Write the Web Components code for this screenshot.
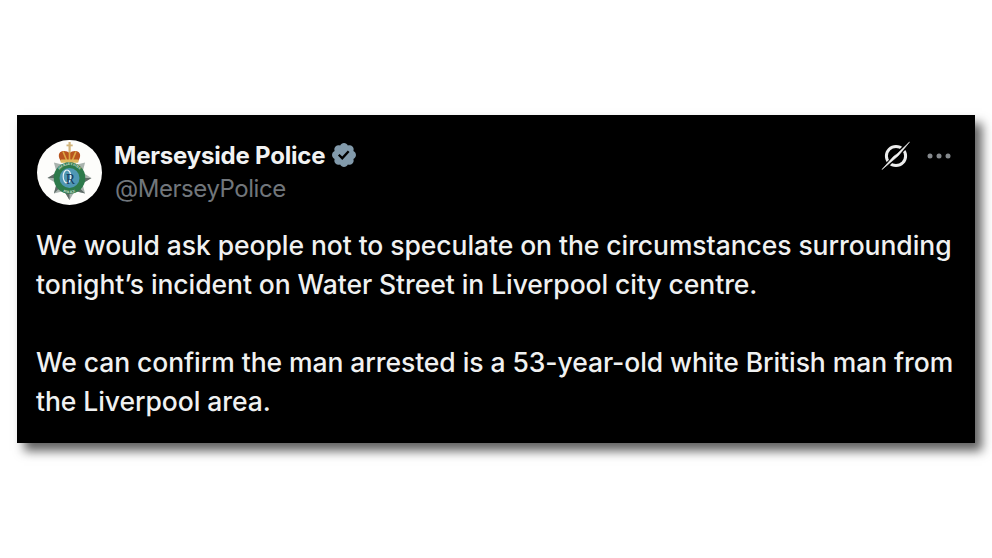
<!DOCTYPE html>
<html>
<head>
<meta charset="utf-8">
<title>Merseyside Police</title>
<style>
    html, body { margin: 0; background: #fff; }
    body { font-family: "Inter", "Liberation Sans", sans-serif; }
</style>
</head>
<body>
<tweet-page>
    <tweet-card>
        <police-avatar slot="avatar"></police-avatar>
        <span slot="name">Merseyside Police</span>
        <span slot="handle">@MerseyPolice</span>
        <p>We would ask people not to speculate on the circumstances surrounding<br>tonight’s incident on Water Street in Liverpool city centre.</p>
        <p>We can confirm the man arrested is a 53-year-old white British man from<br>the Liverpool area.</p>
    </tweet-card>
</tweet-page>
<script>
class TweetPage extends HTMLElement {
    connectedCallback() {
        this.attachShadow({ mode: 'open' })
        this.shadowRoot.innerHTML = `
            <style>
                :host {
                    display: block;
                    box-sizing: border-box;
                    width: 992px;
                    height: 558px;
                    padding: 115px 17px 0;
                    overflow: hidden;
                }
            </style>
            <slot></slot>
        `
    }
}

class PoliceAvatar extends HTMLElement {
    connectedCallback() {
        this.attachShadow({ mode: 'open' })
        this.shadowRoot.innerHTML = `
            <style>
                :host { display: block; width: 65px; height: 65px; }
                svg { display: block; }
                text { font-family: "Liberation Serif", serif; }
            </style>
            <svg width="65" height="65" viewBox="0 0 65 65">
                <defs>
                    <path id="ring-top" d="M19.5 38 A13 13 0 0 1 45.5 38"/>
                    <path id="ring-bottom" d="M17.500 38 A15 15 0 0 0 47.500 38"/>
                </defs>
                <circle cx="32.5" cy="32.5" r="32.5" fill="#fdfdfb"/>
                <!-- star behind the ring -->
                <polygon fill="#a9b3ae" points="32.5,16 37.9,25.100 48.100,22.400 45.400,32.600 54.500,38 45.400,43.400 48.100,53.600 37.900,50.900 32.500,60 27.100,50.900 16.900,53.600 19.600,43.400 10.500,38 19.600,32.600 16.900,22.400 27.100,25.100"/>
                <path d="M54.500 38 L45.400 43.400 L32.500 38 Z M48.100 53.600 L37.900 50.900 L32.500 38 Z M32.500 60 L27.100 50.900 L32.500 38 Z M16.900 53.600 L19.600 43.400 L32.500 38 Z M10.500 38 L19.600 32.600 L32.500 38 Z" fill="#5f6c68"/>
                <!-- crown -->
                <rect x="31.500" y="2" width="2.200" height="10" fill="#d2b47a"/>
                <rect x="29.500" y="4.500" width="6.200" height="1.800" fill="#d2b47a"/>
                <path d="M24.500 22 C20.500 17 21 11.500 26 11 C28.500 10.700 31 11.500 32.500 13 C34 11.500 36.500 10.700 39 11 C44 11.500 44.500 17 40.500 22 Z" fill="#b8541f"/>
                <path d="M26 11.500 L29.500 20 M39 11.500 L35.500 20 M32.500 12 V20" stroke="#dda845" stroke-width="1.600" fill="none"/>
                <rect x="23.500" y="19.500" width="18" height="3.200" rx="1" fill="#dfb95f"/>
                <!-- ring -->
                <circle cx="32.500" cy="38" r="15.800" fill="#2d7a4b"/>
                <circle cx="32.500" cy="38" r="10" fill="#4f97b4"/>
                <text font-size="3.300" font-weight="700" fill="#e6ede6" letter-spacing=".15"><textPath href="#ring-top" startOffset="50%" text-anchor="middle">MERSEYSIDE</textPath></text>
                <text font-size="3.300" font-weight="700" fill="#e6ede6"><textPath href="#ring-bottom" startOffset="50%" text-anchor="middle">POLICE</textPath></text>
                <ellipse cx="30" cy="36.500" rx="3.800" ry="6.500" fill="none" stroke="#e8f0f4" stroke-width="1.200"/>
                <text x="33.500" y="43.500" font-size="14" fill="#143a5e" text-anchor="middle">R</text>
            </svg>
        `
    }
}

class TweetCard extends HTMLElement {
    connectedCallback() {
        this.attachShadow({ mode: 'open' })
        this.shadowRoot.innerHTML = `
            <style>
                :host {
                    display: block;
                    box-sizing: border-box;
                    width: 958px;
                    height: 328px;
                    padding: 25px 20px 0;
                    background: #000;
                    color: #f0f1f1;
                    box-shadow: 7px 8px 10px rgba(0, 0, 0, .62);
                    font-family: "Inter", "Liberation Sans", sans-serif;
                }
                .head {
                    display: flex;
                    gap: 12px;
                    height: 65px;
                }
                .who {
                    display: flex;
                    flex-direction: column;
                    gap: 4px;
                    padding-top: 1px;
                }
                .name {
                    display: flex;
                    align-items: center;
                    gap: 5px;
                    font-size: 24px;
                    font-weight: 700;
                    line-height: 29px;
                    letter-spacing: -0.2px;
                    color: #f1f2f2;
                }
                .name svg { margin-top: -1px; }
                .handle {
                    margin-left: 1px;
                    font-size: 24px;
                    line-height: 29px;
                    letter-spacing: -0.45px;
                    color: #71767b;
                }
                .tools {
                    margin-left: auto;
                    display: flex;
                    align-items: flex-start;
                    gap: 16px;
                    padding: 1px 4px 0 0;
                }
                .body {
                    margin: 21px 0 0 -1px;
                    font-size: 26.5px;
                    font-weight: 500;
                    line-height: 39px;
                    letter-spacing: -0.07px;
                    white-space: nowrap;
                }
                ::slotted(p) { margin: 0 0 39px; }
            </style>
            <div class="head">
                <slot name="avatar"></slot>
                <div class="who">
                    <div class="name">
                        <slot name="name"></slot>
                        <svg width="28" height="28" viewBox="0 0 24 24"><path fill="#829aab" d="M22.25 12c0-1.43-.88-2.67-2.19-3.34.46-1.39.2-2.9-.81-3.91s-2.52-1.27-3.91-.81c-.66-1.31-1.91-2.19-3.34-2.19s-2.67.88-3.33 2.19c-1.4-.46-2.91-.2-3.92.81s-1.26 2.52-.8 3.91c-1.31.67-2.2 1.91-2.2 3.34s.89 2.67 2.2 3.34c-.46 1.39-.21 2.9.8 3.91s2.52 1.26 3.91.81c.67 1.31 1.91 2.19 3.34 2.19s2.68-.88 3.34-2.19c1.39.45 2.9.2 3.91-.81s1.27-2.52.81-3.91c1.31-.67 2.19-1.91 2.19-3.34zm-11.71 4.2L6.8 12.46l1.41-1.42 2.26 2.26 4.8-5.23 1.47 1.36-6.2 6.77z"/></svg>
                    </div>
                    <div class="handle"><slot name="handle"></slot></div>
                </div>
                <div class="tools">
                    <svg width="30" height="30" viewBox="0 0 30 30">
                        <circle cx="15" cy="15" r="9.600" fill="none" stroke="#eceded" stroke-width="3"/>
                        <path d="M1 29 L29 1" stroke="#000" stroke-width="4.500"/>
                        <path d="M1 28.500 L12.500 15.500 L16 13 L28.500 1 L17.500 14.500 L14 17.500 Z" fill="#f2f2f2" stroke="#f2f2f2" stroke-width=".6"/>
                    </svg>
                    <svg width="24" height="30" viewBox="0 0 24 30">
                        <circle cx="3" cy="15" r="2.500" fill="#85898d"/>
                        <circle cx="12" cy="15" r="2.500" fill="#85898d"/>
                        <circle cx="21" cy="15" r="2.500" fill="#85898d"/>
                    </svg>
                </div>
            </div>
            <div class="body"><slot></slot></div>
        `
    }
}

customElements.define('tweet-page', TweetPage)
customElements.define('police-avatar', PoliceAvatar)
customElements.define('tweet-card', TweetCard)
</script>
</body>
</html>
